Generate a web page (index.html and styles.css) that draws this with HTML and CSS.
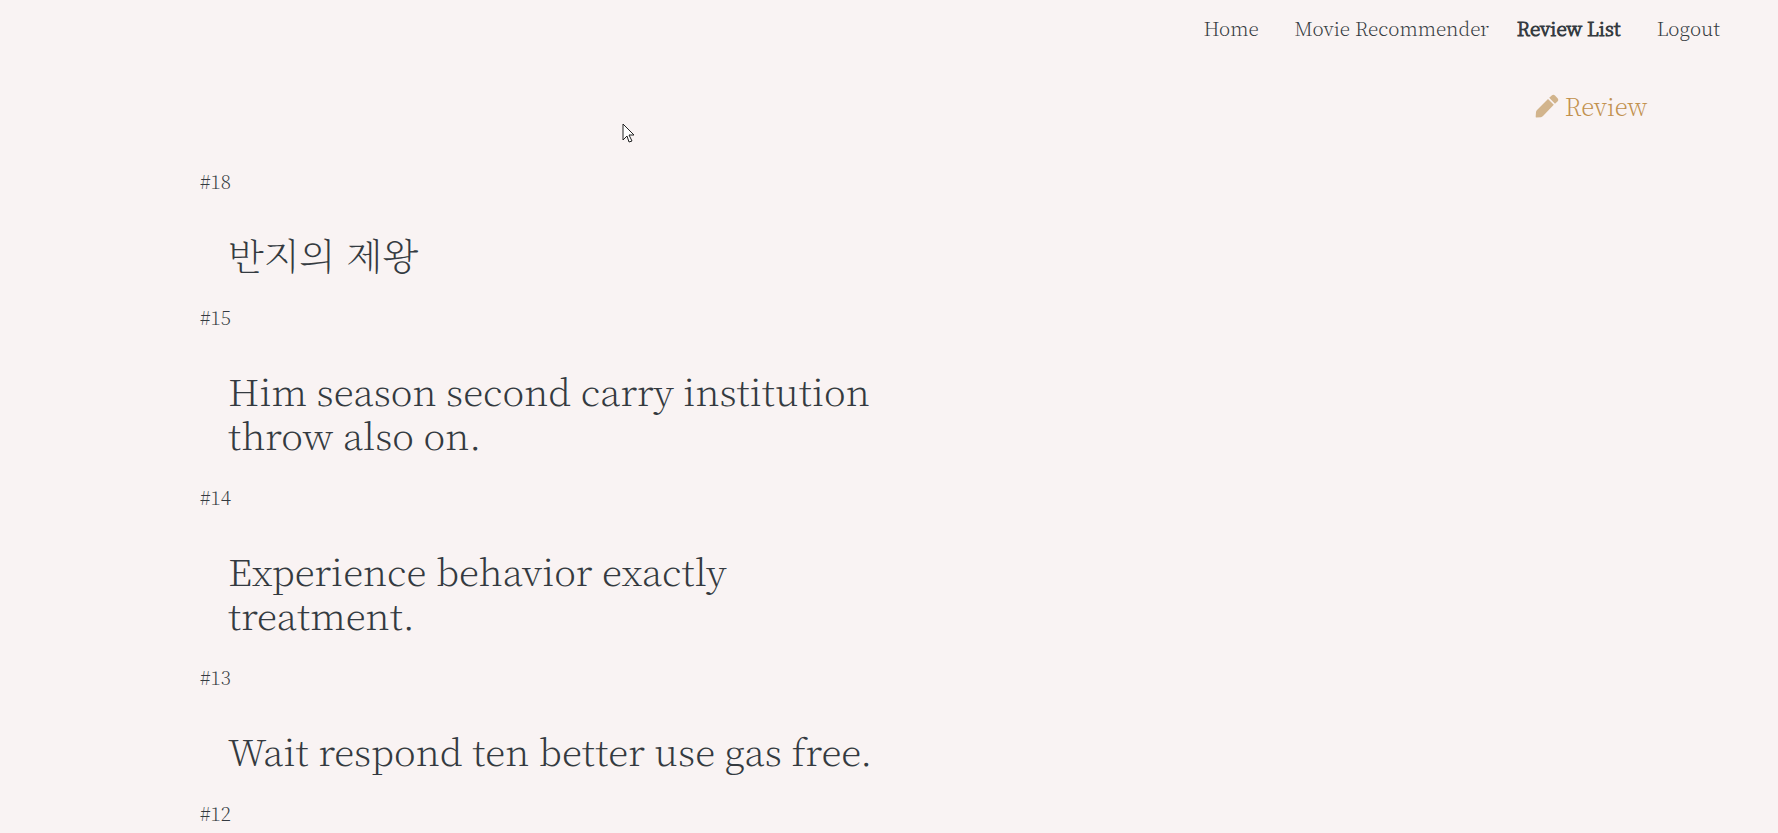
FILE: index.html
```html
<!DOCTYPE html>
<html lang="en">
<head>
<meta charset="utf-8">
<title>Review List</title>
<link rel="stylesheet" href="styles.css">
</head>
<body>
<nav class="nav">
  <a class="home" href="#">Home</a>
  <a class="recommender" href="#">Movie Recommender</a>
  <a class="current" href="#" aria-current="page">Review List</a>
  <a class="logout" href="#">Logout</a>
</nav>
<main class="content">
  <div class="actions">
    <a class="write" href="#">
      <svg class="pencil" viewBox="0 0 24 24" aria-hidden="true"><path d="M1.200 23.500Q0.600 23.500 0.700 22.500L1 18Q1.200 17 2 16L13 5L18.800 10.800L8 22Q7 23 6 23.200ZM14.200 3.800L16.700 1.400Q18.500 0 20 1.500L22.800 4.500Q24 6 22.700 7.300L20 9.800Z"/></svg>
      Review
    </a>
  </div>
  <section class="review"><p class="number">#18</p><h2 class="title"><a href="#" lang="ko">반지의 제왕</a></h2></section>
  <section class="review"><p class="number">#15</p><h2 class="title"><a href="#">Him season second carry institution throw also on.</a></h2></section>
  <section class="review"><p class="number">#14</p><h2 class="title"><a href="#">Experience behavior exactly treatment.</a></h2></section>
  <section class="review"><p class="number">#13</p><h2 class="title"><a href="#">Wait respond ten better use gas free.</a></h2></section>
  <section class="review"><p class="number">#12</p></section>
</main>
<svg class="cursor" viewBox="0 0 13 20" aria-hidden="true"><path d="M1 1v16l4-4 2 6 3-1-3-6h5z"/></svg>
</body>
</html>
```
FILE: styles.css
```css
* { box-sizing: border-box; }
body {
  margin: 0;
  background: #f9f3f3;
  color: #343a40;
  font-family: "Noto Serif KR", "Source Serif Pro", "Liberation Serif", "Noto Sans CJK KR", serif;
  font-size: 19px;
  font-weight: 200;
  line-height: 32px;
}
a { color: inherit; text-decoration: none; }
.nav {
  display: flex;
  justify-content: flex-end;
  gap: 28px;
  padding: 12px 58px 12px 0;
}
.home { margin-right: 8px; }
.logout { margin-left: 8px; }
.current { -webkit-text-stroke: 1px; }
.content { padding: 0 7.35% 0 200px; }
.actions {
  display: flex;
  justify-content: flex-end;
  padding: 34px 0 43px;
}
.write {
  display: flex;
  align-items: center;
  gap: 6px;
  color: #c2914e;
  font-size: 24px;
}
.pencil { width: 24px; height: 24px; fill: #d2b48c; }
.number { margin: 0; }
.title {
  width: 48%;
  margin: 0;
  padding: 35px 0 25px 28px;
  font-size: 37px;
  font-weight: 200;
  line-height: 44px;
}
.cursor {
  position: absolute;
  top: 123px;
  left: 622px;
  width: 13px;
  height: 20px;
  fill: #fff;
  stroke: #222;
}
```
